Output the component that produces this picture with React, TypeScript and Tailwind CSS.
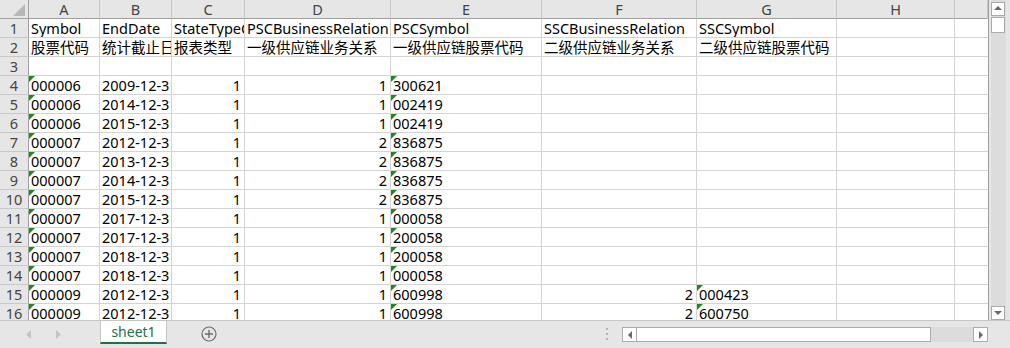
const cols = ["A", "B", "C", "D", "E", "F", "G", "H", ""];

type Cell = { v: string; right?: boolean; tri?: boolean };

const t = (v: string): Cell => ({ v, tri: true });
const n = (v: string): Cell => ({ v, right: true });
const s = (v: string): Cell => ({ v });
const e: Cell = { v: "" };

const rows: Cell[][] = [
  [s("Symbol"), s("EndDate"), s("StateTypeCode"), s("PSCBusinessRelation"), s("PSCSymbol"), s("SSCBusinessRelation"), s("SSCSymbol"), e, e],
  [s("股票代码"), s("统计截止日期"), s("报表类型"), s("一级供应链业务关系"), s("一级供应链股票代码"), s("二级供应链业务关系"), s("二级供应链股票代码"), e, e],
  [e, e, e, e, e, e, e, e, e],
  [t("000006"), s("2009-12-31"), n("1"), n("1"), t("300621"), e, e, e, e],
  [t("000006"), s("2014-12-31"), n("1"), n("1"), t("002419"), e, e, e, e],
  [t("000006"), s("2015-12-31"), n("1"), n("1"), t("002419"), e, e, e, e],
  [t("000007"), s("2012-12-31"), n("1"), n("2"), t("836875"), e, e, e, e],
  [t("000007"), s("2013-12-31"), n("1"), n("2"), t("836875"), e, e, e, e],
  [t("000007"), s("2014-12-31"), n("1"), n("2"), t("836875"), e, e, e, e],
  [t("000007"), s("2015-12-31"), n("1"), n("2"), t("836875"), e, e, e, e],
  [t("000007"), s("2017-12-31"), n("1"), n("1"), t("000058"), e, e, e, e],
  [t("000007"), s("2017-12-31"), n("1"), n("1"), t("200058"), e, e, e, e],
  [t("000007"), s("2018-12-31"), n("1"), n("1"), t("200058"), e, e, e, e],
  [t("000007"), s("2018-12-31"), n("1"), n("1"), t("000058"), e, e, e, e],
  [t("000009"), s("2012-12-31"), n("1"), n("1"), t("600998"), n("2"), t("000423"), e, e],
  [t("000009"), s("2012-12-31"), n("1"), n("1"), t("600998"), n("2"), t("600750"), e, e],
];

const font = { fontFamily: '"Noto Sans", "Noto Sans CJK SC", sans-serif' };

function ArrowBox({ dir }: { dir: "up" | "down" | "left" | "right" }) {
  const pts = {
    up: "3,8 7,4 11,8",
    down: "3,5 7,9 11,5",
    left: "9,3 5,7 9,11",
    right: "5,3 9,7 5,11",
  }[dir];
  return (
    <div className="w-[14px] h-[14px] bg-white border border-[#ababab] flex items-center justify-center">
      <svg width="12" height="12" viewBox="1 1 12 12">
        <polygon points={pts} fill="#6a6a6a" />
      </svg>
    </div>
  );
}

export default function App() {
  return (
    <div className="w-[1010px] h-[348px] bg-[#e6e6e6] flex flex-col overflow-hidden text-black" style={font}>
      <div className="flex h-[320px]">
        <div className="w-[989px] h-[320px] overflow-hidden bg-white border-r border-[#9f9f9f]">
          <div className="grid grid-cols-[29px_71px_72px_73px_146px_151px_155px_140px_118px_33px] auto-rows-[19px] text-[14.5px] leading-none">
            <div className="bg-[#e6e6e6] border-r border-b border-[#9f9f9f] relative">
              <svg className="absolute left-[13px] top-[4px]" width="13" height="13" viewBox="0 0 13 13">
                <polygon points="0,12 12,12 12,0" fill="#b7b7b7" />
              </svg>
            </div>
            {cols.map((c, i) => (
              <div
                key={"h" + i}
                className="bg-[#e6e6e6] border-r border-b border-r-[#c8c8c8] border-b-[#9f9f9f] flex items-center justify-center text-[#444] text-[14.5px]"
              >
                {c}
              </div>
            ))}
            {rows.map((r, ri) => (
              <>
                <div
                  key={"r" + ri}
                  className="bg-[#e6e6e6] border-r border-b border-r-[#9f9f9f] border-b-[#c8c8c8] flex items-center justify-center text-[#444] text-[14.5px]"
                >
                  {ri + 1}
                </div>
                {r.map((c, ci) => (
                  <div
                    key={ri + "-" + ci}
                    className={
                      "relative border-b border-[#d4d4d4] flex items-center overflow-hidden whitespace-nowrap " +
                      (ci < 8 ? "border-r " : "") +
                      (c.right ? "justify-end pr-[3px]" : "pl-[2px]")
                    }
                  >
                    {c.tri && (
                      <div className="absolute left-0 top-0 w-0 h-0 border-t-[6px] border-r-[6px] border-t-[#1d8a1d] border-r-transparent" />
                    )}
                    {c.v}
                  </div>
                ))}
              </>
            ))}
          </div>
        </div>
        <div className="ml-[2px] w-[15px] h-[320px] bg-[#dcdcdc] flex flex-col">
          <div className="mt-[2px]">
            <ArrowBox dir="up" />
          </div>
          <div className="mt-[1px] w-[14px] h-[16px] bg-white border border-[#ababab]" />
          <div className="mt-auto">
            <ArrowBox dir="down" />
          </div>
        </div>
      </div>
      <div className="flex h-[28px] items-start border-t border-[#c6c6c6]">
        <div className="flex items-center h-[26px] pl-[26px] gap-[24px]">
          <svg width="6" height="9" viewBox="0 0 6 9">
            <polygon points="5,0 0,4.5 5,9" fill="#c4c4c4" />
          </svg>
          <svg width="6" height="9" viewBox="0 0 6 9">
            <polygon points="0,0 5,4.5 0,9" fill="#c4c4c4" />
          </svg>
        </div>
        <div className="ml-[38px] w-[67px] h-[23px] bg-white border-x border-[#c6c6c6] border-b-2 border-b-[#217346] flex items-center justify-center text-[14px] text-[#217346]">
          sheet1
        </div>
        <div className="ml-[34px] h-[26px] flex items-center">
          <svg width="16" height="16" viewBox="0 0 16 16">
            <circle cx="8" cy="8" r="7" fill="none" stroke="#6c6c6c" strokeWidth="1.2" />
            <path d="M8 4v8M4 8h8" stroke="#6c6c6c" strokeWidth="1.4" />
          </svg>
        </div>
        <div className="ml-[389px] h-[26px] flex items-center">
          <svg width="3" height="12" viewBox="0 0 3 12">
            <rect x="0" y="0" width="2" height="2" fill="#b4b4b4" />
            <rect x="0" y="5" width="2" height="2" fill="#b4b4b4" />
            <rect x="0" y="10" width="2" height="2" fill="#b4b4b4" />
          </svg>
        </div>
        <div className="ml-[13px] mt-[6px] w-[366px] h-[15px] flex bg-[#dcdcdc]">
          <div className="w-[15px] h-[15px] bg-white border border-[#ababab] flex items-center justify-center">
            <svg width="12" height="12" viewBox="1 1 12 12">
              <polygon points="9,3 5,7 9,11" fill="#6a6a6a" />
            </svg>
          </div>
          <div className="w-[294px] h-[15px] bg-white border border-[#ababab] border-l-0" />
          <div className="ml-auto w-[15px] h-[15px] bg-white border border-[#ababab] flex items-center justify-center">
            <svg width="12" height="12" viewBox="1 1 12 12">
              <polygon points="5,3 9,7 5,11" fill="#6a6a6a" />
            </svg>
          </div>
        </div>
      </div>
    </div>
  );
}
